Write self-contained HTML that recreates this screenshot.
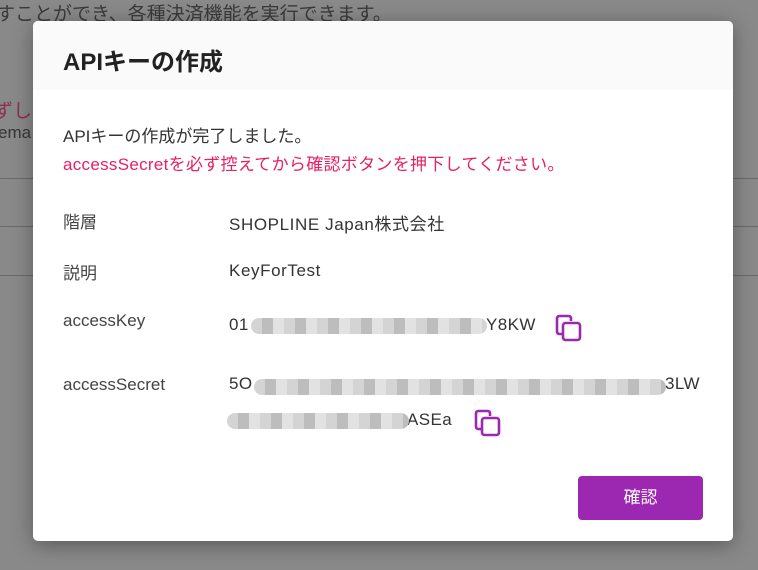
<!DOCTYPE html>
<html><head><meta charset="utf-8"><style>
body{margin:0;width:758px;height:570px;overflow:hidden;background:#898989;font-family:"Liberation Sans","Noto Sans CJK JP",sans-serif;position:relative}
.bg{position:absolute;color:#3a3a3a;font-size:19px;white-space:nowrap}
.ln{position:absolute;left:0;width:758px;height:1px;background:#6a6a6a}
.modal{position:absolute;left:33px;top:21px;width:700px;height:520px;background:#fff;border-radius:5px;box-shadow:0 4px 20px rgba(0,0,0,.35);overflow:hidden}
.hd{height:69px;background:#fafafa;}
.hd h1{margin:0;position:absolute;left:30px;top:21px;font-size:24px;font-weight:bold;color:#222}
.t{position:absolute;font-size:17px;color:#333;white-space:nowrap;letter-spacing:0.4px}
.lab{color:#444;letter-spacing:0}
.blur{position:absolute;height:16px;border-radius:8px;background:repeating-linear-gradient(90deg,#d4d4d4 0 11px,#bdbdbd 11px 22px,#e2e2e2 22px 33px)}
.btn{position:absolute;left:545px;top:455px;width:125px;height:44px;background:#9c27b0;border-radius:4px;color:#fff;font-size:17px;text-align:center;line-height:44px}
</style></head><body>
<div class="bg" style="left:-4px;top:-1px">すことができ、各種決済機能を実行できます。</div>
<div class="bg" style="left:-6px;top:96px;color:#8a3050">ずして</div>
<div class="ln" style="top:178px"></div><div class="ln" style="top:226px"></div><div class="ln" style="top:275px"></div>
<div class="modal">
<div class="hd"><h1>APIキーの作成</h1></div>
<div class="t" style="left:30px;top:101px;letter-spacing:0">APIキーの作成が完了しました。</div>
<div class="t" style="left:30px;top:129px;color:#e91e63;letter-spacing:0.3px">accessSecretを必ず控えてから確認ボタンを押下してください。</div>
<div class="t lab" style="left:30px;top:187px">階層</div>
<div class="t" style="left:196px;top:189px;letter-spacing:0.6px">SHOPLINE Japan株式会社</div>
<div class="t lab" style="left:30px;top:238px">説明</div>
<div class="t" style="left:196px;top:240px;letter-spacing:0.6px">KeyForTest</div>
<div class="t lab" style="left:30px;top:290px">accessKey</div>
<div class="t" style="left:196px;top:294px">01</div>
<div class="t" style="left:453px;top:294px">Y8KW</div>
<div class="blur" style="left:218px;top:297px;width:236px"></div>
<div class="t lab" style="left:30px;top:354px">accessSecret</div>
<div class="t" style="left:196px;top:353px">5O</div>
<div class="t" style="left:632px;top:353px">3LW</div>
<div class="blur" style="left:221px;top:358px;width:412px"></div>
<div class="t" style="left:374px;top:389px">ASEa</div>
<div class="blur" style="left:194px;top:392px;width:182px"></div>
<svg style="position:absolute;left:521px;top:292px" width="30" height="30" viewBox="0 0 30 30" fill="none" stroke="#9c27b0" stroke-width="2.6" stroke-linejoin="round"><path d="M9 21H5.5Q3 21 3 18.5V5.5Q3 3 5.5 3h9Q17 3 17 5.5V8"/><rect x="9" y="10" width="17" height="17" rx="2.5"/></svg>
<svg style="position:absolute;left:440px;top:387px" width="30" height="30" viewBox="0 0 30 30" fill="none" stroke="#9c27b0" stroke-width="2.6" stroke-linejoin="round"><path d="M9 21H5.5Q3 21 3 18.5V5.5Q3 3 5.5 3h9Q17 3 17 5.5V8"/><rect x="9" y="10" width="17" height="17" rx="2.5"/></svg>
<div class="btn">確認</div>
</div>
<div class="bg" style="left:-2px;top:123px;font-size:17px;color:#333">ema</div>
</body></html>
